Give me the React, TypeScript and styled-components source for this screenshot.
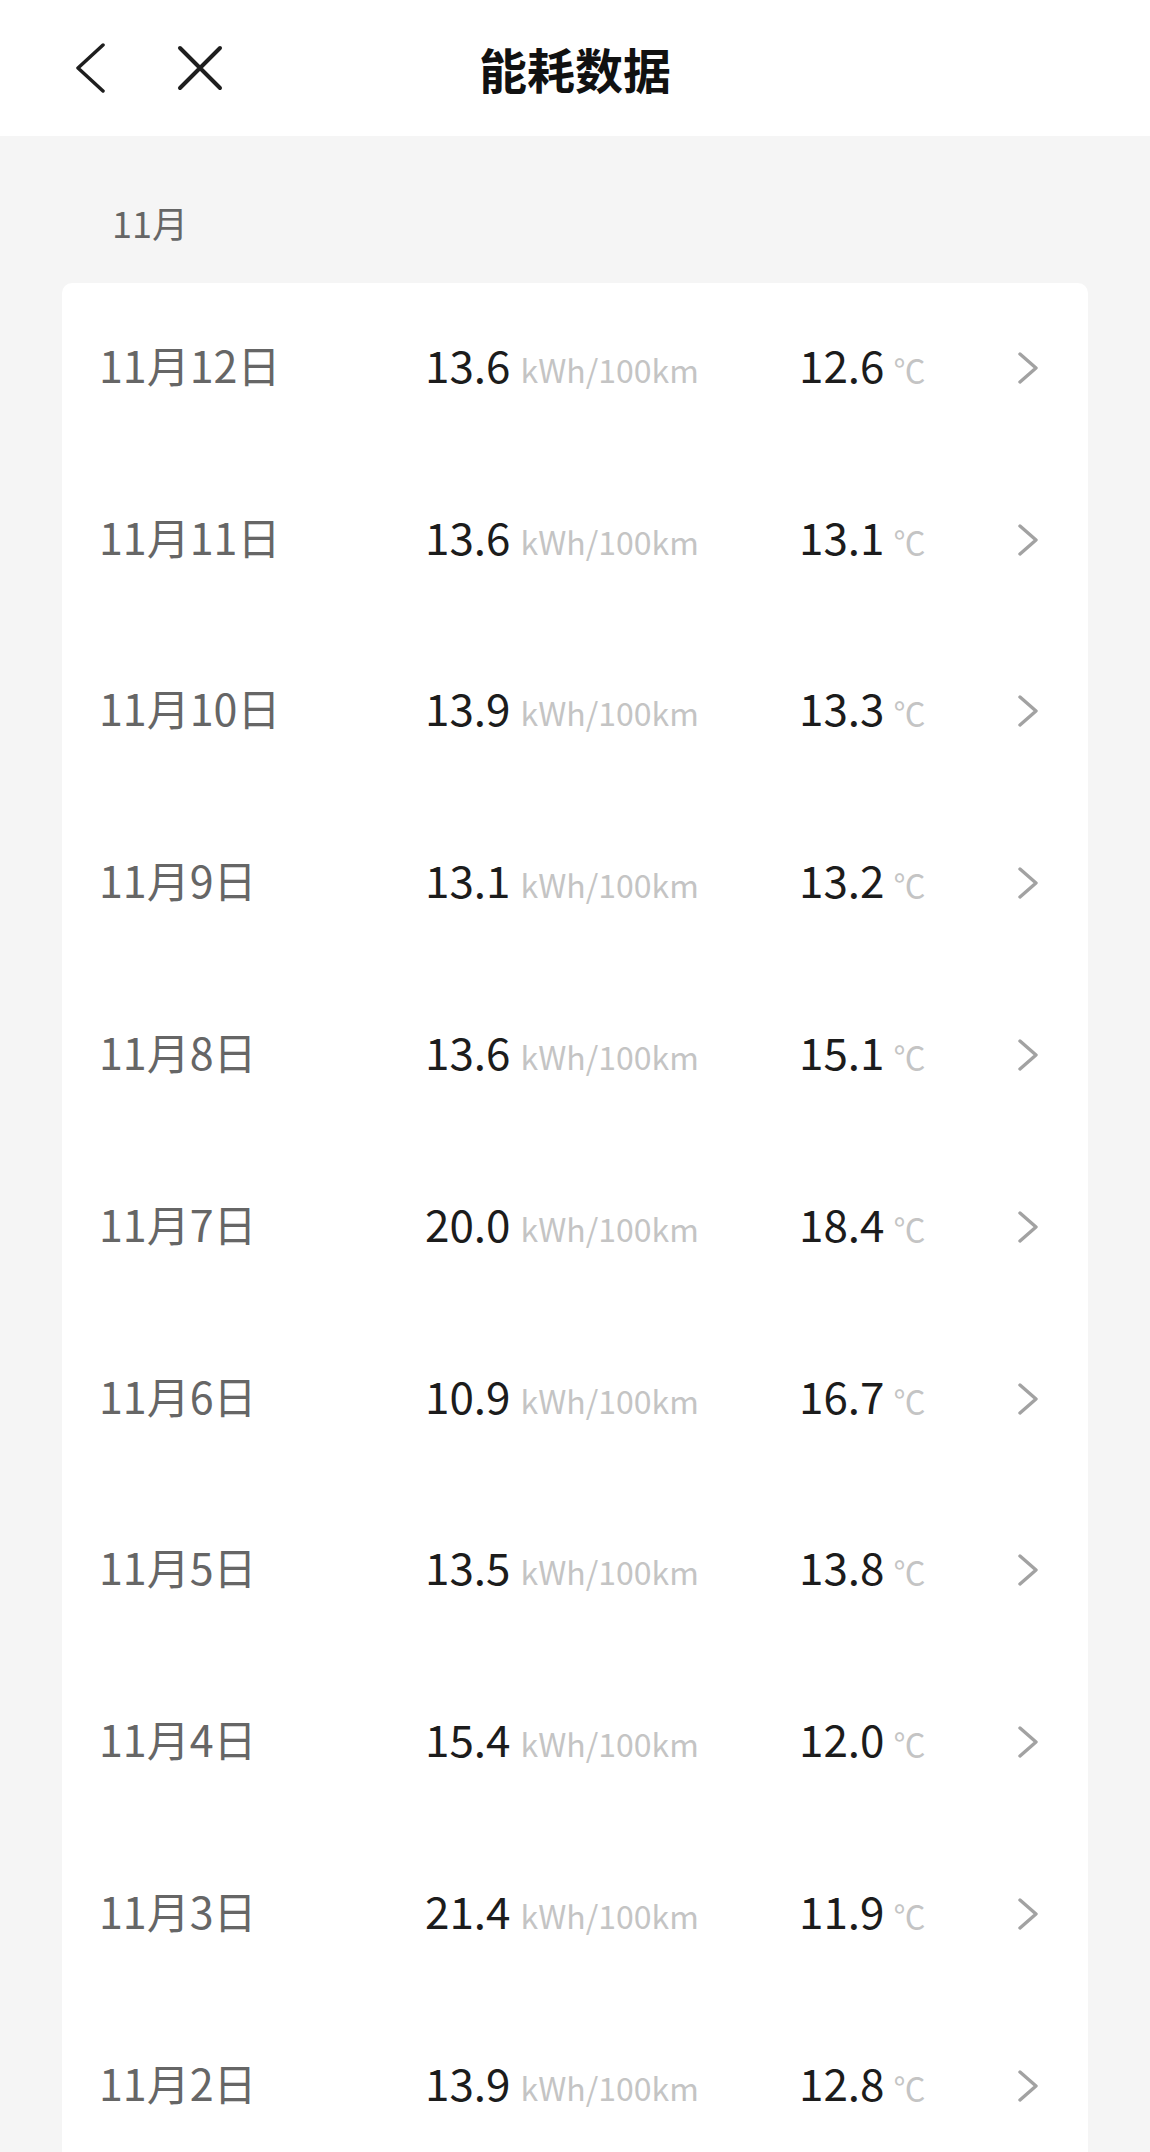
import React from "react";
import styled, { createGlobalStyle } from "styled-components";

const GlobalStyle = createGlobalStyle`
  html, body {
    margin: 0;
    padding: 0;
    background: #f5f5f5;
    font-family: "Noto Sans CJK SC", "Noto Sans", sans-serif;
  }
`;

const Page = styled.div`
  width: 1150px;
  min-height: 2152px;
  background: #f5f5f5;
`;

const Header = styled.header`
  height: 136px;
  background: #ffffff;
  display: grid;
  grid-template-columns: 1fr auto 1fr;
  align-items: center;
`;

const NavIcons = styled.div`
  display: flex;
  align-items: center;
  gap: 72px;
  padding-left: 75px;
`;

const Title = styled.h1`
  margin: 0;
  font-size: 48px;
  font-weight: 700;
  color: #111;
  line-height: 1;
`;

const Content = styled.main`
  padding: 62px 62px 0 62px;
`;

const MonthLabel = styled.div`
  padding-left: 50px;
  font-size: 36px;
  line-height: 48px;
  color: #666;
  margin-bottom: 37px;
`;

const Card = styled.section`
  background: #ffffff;
  border-radius: 10px;
  overflow: hidden;
`;

const Row = styled.div`
  box-sizing: border-box;
  height: 171.8px;
  display: grid;
  grid-template-columns: 326px 374px 1fr auto;
  align-items: center;
  padding: 0 49px 10px 37px;
`;

const DateText = styled.span`
  font-size: 43px;
  color: #666;
`;

const Metric = styled.div`
  display: flex;
  align-items: baseline;
`;

const Value = styled.span`
  font-size: 44px;
  color: #1c1c1c;
`;

const Unit = styled.span`
  font-size: 32px;
  color: #c4c4c4;
  margin-left: ${(p: { $gap?: number }) => p.$gap ?? 10}px;
`;

const ChevronBox = styled.svg`
  display: block;
  margin-top: 8px;
`;

const Chevron = () => (
  <ChevronBox width="22" height="32" viewBox="0 0 22 32">
    <polyline
      points="3,2 19,16 3,30"
      fill="none"
      stroke="#a2a2a2"
      strokeWidth="3.4"
      strokeLinecap="round"
      strokeLinejoin="round"
    />
  </ChevronBox>
);

const rows = [
  { date: "11月12日", energy: "13.6", temp: "12.6" },
  { date: "11月11日", energy: "13.6", temp: "13.1" },
  { date: "11月10日", energy: "13.9", temp: "13.3" },
  { date: "11月9日", energy: "13.1", temp: "13.2" },
  { date: "11月8日", energy: "13.6", temp: "15.1" },
  { date: "11月7日", energy: "20.0", temp: "18.4" },
  { date: "11月6日", energy: "10.9", temp: "16.7" },
  { date: "11月5日", energy: "13.5", temp: "13.8" },
  { date: "11月4日", energy: "15.4", temp: "12.0" },
  { date: "11月3日", energy: "21.4", temp: "11.9" },
  { date: "11月2日", energy: "13.9", temp: "12.8" },
];

export default function App() {
  return (
    <Page>
      <GlobalStyle />
      <Header>
        <NavIcons>
          <svg width="30" height="50" viewBox="0 0 30 50">
            <polyline
              points="28,2 3,25 28,48"
              fill="none"
              stroke="#1e1e1e"
              strokeWidth="3.5"
              strokeLinecap="round"
              strokeLinejoin="round"
            />
          </svg>
          <svg width="46" height="46" viewBox="0 0 46 46">
            <path
              d="M3 3 L43 43 M43 3 L3 43"
              fill="none"
              stroke="#1e1e1e"
              strokeWidth="4"
              strokeLinecap="round"
            />
          </svg>
        </NavIcons>
        <Title>能耗数据</Title>
        <div />
      </Header>
      <Content>
        <MonthLabel>11月</MonthLabel>
        <Card>
          {rows.map((r) => (
            <Row key={r.date}>
              <DateText>{r.date}</DateText>
              <Metric>
                <Value>{r.energy}</Value>
                <Unit>kWh/100km</Unit>
              </Metric>
              <Metric>
                <Value>{r.temp}</Value>
                <Unit $gap={9}>℃</Unit>
              </Metric>
              <Chevron />
            </Row>
          ))}
        </Card>
      </Content>
    </Page>
  );
}
